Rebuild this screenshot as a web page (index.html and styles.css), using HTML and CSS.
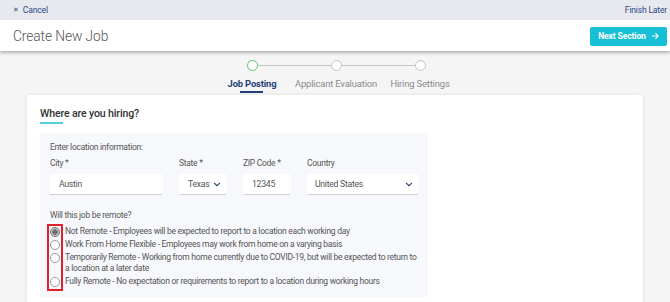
FILE: index.html
```html
<!DOCTYPE html>
<html>
<head>
<meta charset="utf-8">
<link rel="stylesheet" href="styles.css">
</head>
<body>
<div class="topbar">
  <a class="cancel"><span class="x">✕</span>Cancel</a>
  <a class="finish">Finish Later</a>
</div>
<div class="header">
  <h1 class="title">Create New Job</h1>
  <button class="next">Next Section
    <svg width="8" height="8" viewBox="0 0 10 10"><path d="M1 5h8M5.5 1.5L9 5l-3.5 3.5" fill="none" stroke="#fff" stroke-width="1.3"/></svg>
  </button>
</div>
<div class="stepper">
  <div class="track">
    <span class="dot active"></span><span class="line"></span><span class="dot"></span><span class="line"></span><span class="dot"></span>
  </div>
  <div class="labels">
    <span class="step current">Job Posting</span>
    <span class="step">Applicant Evaluation</span>
    <span class="step">Hiring Settings</span>
  </div>
</div>
<div class="card">
  <h2 class="card-title">Where are you hiring?</h2>
  <div class="panel">
    <div class="intro">Enter location information:</div>
    <div class="fields">
      <div class="field w-city"><label>City *</label><div class="input">Austin</div></div>
      <div class="field w-state"><label>State *</label><div class="input select">Texas<svg width="8" height="5" viewBox="0 0 9 6"><path d="M1 1l3.5 3.5L8 1" fill="none" stroke="#2b3f6b" stroke-width="1.3"/></svg></div></div>
      <div class="field w-zip"><label>ZIP Code *</label><div class="input">12345</div></div>
      <div class="field w-country"><label>Country</label><div class="input select">United States<svg width="8" height="5" viewBox="0 0 9 6"><path d="M1 1l3.5 3.5L8 1" fill="none" stroke="#2b3f6b" stroke-width="1.3"/></svg></div></div>
    </div>
    <div class="question">Will this job be remote?</div>
    <div class="radios">
      <div class="highlight"></div>
      <div class="radio"><span class="circle checked"></span><span class="rtext">Not Remote - Employees will be expected to report to a location each working day</span></div>
      <div class="radio"><span class="circle"></span><span class="rtext">Work From Home Flexible - Employees may work from home on a varying basis</span></div>
      <div class="radio"><span class="circle"></span><span class="rtext">Temporarily Remote - Working from home currently due to COVID-19, but will be expected to return to a location at a later date</span></div>
      <div class="radio"><span class="circle"></span><span class="rtext">Fully Remote - No expectation or requirements to report to a location during working hours</span></div>
    </div>
  </div>
</div>
</body>
</html>
```
FILE: styles.css
```css
* { box-sizing: border-box; }
html, body { margin: 0; padding: 0; }
body {
  background: #f5f5f5;
  font-family: Roboto, "Liberation Sans", sans-serif;
  width: 670px;
  height: 302px;
  overflow: hidden;
}
.topbar {
  height: 20px;
  background: #e8e9ee;
  display: flex;
  align-items: center;
  justify-content: space-between;
  padding: 0 3px 0 13px;
  font-size: 8.6px;
  letter-spacing: -0.2px;
  color: #2d4a86;
}
.cancel { display: flex; align-items: center; }
.cancel .x { font-size: 7px; margin-right: 4px; }
.header {
  height: 31px;
  background: #fff;
  display: flex;
  align-items: center;
  justify-content: space-between;
  padding: 0 3px 0 13px;
  box-shadow: 0 2px 3px rgba(0,0,0,0.28);
  position: relative;
  z-index: 1;
}
.title {
  margin: 0;
  font-size: 13.8px;
  letter-spacing: -0.1px;
  font-weight: 300;
  color: #555;
}
.next {
  border: 0;
  background: #17bfd6;
  color: #fff;
  font-family: inherit;
  font-weight: 700;
  font-size: 8.6px;
  letter-spacing: -0.15px;
  height: 19px;
  width: 77px;
  border-radius: 2px;
  display: flex;
  align-items: center;
  justify-content: center;
  gap: 5px;
  padding: 0;
  margin-top: 1px;
}
.stepper {
  height: 44px;
  display: flex;
  flex-direction: column;
  align-items: center;
  padding-top: 9px;
}
.track { display: flex; align-items: center; margin-left: 2px; }
.dot {
  width: 11px; height: 11px; border-radius: 50%;
  border: 1.3px solid #c4c4c4; background: #fff;
}
.dot.active { border-color: #5cc46a; }
.line { width: 73px; height: 1px; background: #c4c4c4; }
.labels { display: grid; grid-template-columns: 84px 84px 84px; margin-top: 7px; margin-left: 2px; font-size: 9.4px; letter-spacing: -0.15px; line-height: 11px; color: #8a8a8a; }
.step { text-align: center; white-space: nowrap; padding-bottom: 4px; position: relative; }
.step.current { color: #233f7a; font-weight: 700; }
.step.current::after {
  content: "";
  position: absolute;
  left: 50%; bottom: 0;
  width: 23px; height: 2px;
  margin-left: -12px;
  background: #233f7a;
}
.card {
  margin-left: 27px;
  width: 616px;
  background: #fff;
  height: 220px;
  border-radius: 2px;
  box-shadow: 0 0 3px rgba(0,0,0,0.12);
  padding: 12px 13px 0;
}
.card-title {
  margin: 0;
  font-size: 10.6px;
  letter-spacing: -0.15px;
  line-height: 13px;
  font-weight: 500;
  color: #333;
  display: block;
  width: fit-content;
  padding-bottom: 3px;
  position: relative;
}
.card-title::after {
  content: "";
  position: absolute;
  left: 0; bottom: -1px;
  width: 23px; height: 2px;
  background: #53cfe0;
}
.panel {
  margin-top: 10px;
  width: 388px;
  background: #f7f8fc;
  padding: 9px 10px 10px;
  height: 164px;
  font-size: 8.5px;
  letter-spacing: -0.28px;
  color: #555;
}
.intro { line-height: 10px; }
.fields { display: flex; gap: 17px; margin-top: 6px; }
.field label { display: block; line-height: 10px; margin-bottom: 6px; }
.input {
  height: 21px;
  background: #fff;
  border-bottom: 1px solid #d4d4d4;
  font-size: 8.7px;
  display: flex;
  align-items: center;
  justify-content: space-between;
  padding: 0 9px;
}
.w-city { width: 112px; }
.w-state { width: 47px; }
.w-zip { width: 47px; }
.w-country { width: 111px; }
.select { padding-right: 5px; }
.w-country .select { padding-left: 8px; }
.question { line-height: 10px; margin-top: 15px; }
.radios { position: relative; margin-top: 6px; }
.highlight {
  position: absolute;
  left: -3px; top: -2px;
  width: 16px; height: 67px;
  border: 2.5px solid #e0202a;
}
.radio { display: flex; align-items: flex-start; line-height: 11px; margin-bottom: 2px; }
.circle {
  flex: none;
  width: 10px; height: 10px;
  border-radius: 50%;
  border: 1px solid #9a9a9a;
  background: #fff;
  margin-right: 5px;
  margin-top: 0.5px;
}
.circle.checked { border-color: #6f6f6f; background: radial-gradient(circle, #6f6f6f 0 2.5px, #c9c9c9 3px); }
.rtext { width: 353px; }
```
